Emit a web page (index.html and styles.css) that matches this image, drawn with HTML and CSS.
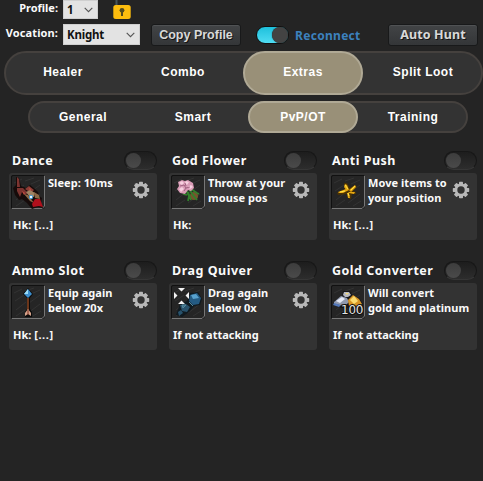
FILE: index.html
```html
<!DOCTYPE html>
<html lang="en">
<head>
  <meta charset="UTF-8" />
  <title>Extras</title>
  <link rel="stylesheet" href="styles.css">
</head>
<body>
  <svg class="defs" width="0" height="0">
    <symbol id="gear" viewBox="-9 -9 18 18">
      <g fill="#b9b9b9">
        <rect x="-2" y="-8.2" width="4" height="16.4" rx="0.7"/>
        <rect x="-2" y="-8.2" width="4" height="16.4" rx="0.7" transform="rotate(45)"/>
        <rect x="-2" y="-8.2" width="4" height="16.4" rx="0.7" transform="rotate(90)"/>
        <rect x="-2" y="-8.2" width="4" height="16.4" rx="0.7" transform="rotate(135)"/>
        <circle r="6.4"/>
      </g>
      <circle r="3.7" fill="#333"/>
    </symbol>
    <symbol id="chevron" viewBox="0 0 9 6">
      <path d="M0.7 0.8 L4.5 4.6 L8.3 0.8" fill="none" stroke="#555" stroke-width="1.1"/>
    </symbol>
    <symbol id="slot" viewBox="0 0 34 34">
      <rect width="34" height="34" rx="2" fill="#252525"/>
      <path d="M3 8l8-4M14 6l9-3M4 16l9-6M20 9l9-4M5 25l10-8M18 18l11-8M5 31l9-6M17 28l12-9M22 31l8-5" stroke="#333" fill="none"/>
      <path d="M0.5 33 V2 Q0.5 0.5 2 0.5 H33" stroke="#111" fill="none"/>
      <path d="M1 33.5 H31 L33.5 31 V1" stroke="#777" fill="none"/>
    </symbol>
  </svg>

  <div class="row profile-row">
    <label>Profile:</label>
    <div class="select small">1 <svg width="9" height="6"><use href="#chevron"/></svg></div>
    <svg class="lock" width="18" height="20" viewBox="0 0 18 20">
      <path d="M3.5 0 V6" stroke="#46545a" stroke-width="2"/>
      <rect x="0.3" y="5" width="17.4" height="14" rx="2.5" fill="#fdbd0e"/>
      <circle cx="9" cy="10.3" r="2.4" fill="#544b1e"/>
      <rect x="8" y="11" width="2" height="5" fill="#544b1e"/>
    </svg>
  </div>
  <div class="row vocation-row">
    <label>Vocation:</label>
    <div class="select">Knight <svg width="9" height="6"><use href="#chevron"/></svg></div>
    <button class="copy">Copy Profile</button>
    <span class="switch on"></span>
    <span class="reconnect">Reconnect</span>
    <button class="hunt">Auto Hunt</button>
  </div>

  <div class="tabs main-tabs">
    <div class="tab">Healer</div>
    <div class="tab">Combo</div>
    <div class="tab active">Extras</div>
    <div class="tab">Split Loot</div>
  </div>
  <div class="tabs sub-tabs">
    <div class="tab">General</div>
    <div class="tab">Smart</div>
    <div class="tab active">PvP/OT</div>
    <div class="tab">Training</div>
  </div>

  <div class="grid">
    <div class="item">
      <div class="head"><span>Dance</span><span class="switch"></span></div>
      <div class="card">
        <div class="info">
          <svg class="icon" width="34" height="34" viewBox="0 0 34 34">
            <use href="#slot"/>
            <path d="M5 2l3 1 2 8 5 2 4-3 5 4 3 3 1 4 3 2-1 5 2 5-5-1-6 2-5-6-5-4-3 1-4-5-2-7 3-3z" fill="#160b0a"/>
            <path d="M6 2l2 2 1 8-3 0zM6 13l6 0 5 5-3 2-3-3-2 5-3-6z" fill="#7c3430"/>
            <path d="M14 14l4-3 5 4-3 3z" fill="#8c3d36"/>
            <path d="M15 17l4-2 5 3-1 4-5-1z" fill="#a08463"/>
            <path d="M13 19l4 1 6 8-4-2zM23 17l5 3 1 4-5-1z" fill="#8b6946"/>
            <path d="M24 24l5 0 3 8-4-1-6 1-1-3z" fill="#b0101c"/>
            <path d="M11 16l3 2-1 2zM18 13l2 1-1 2z" fill="#c34b40"/>
            <circle cx="20" cy="22" r="2.2" fill="#4b9bd0"/>
            <rect x="19" y="21" width="2" height="2" fill="#eef8ff"/>
          </svg>
          <p>Sleep: 10ms</p>
          <svg class="gear" width="18" height="18"><use href="#gear"/></svg>
        </div>
        <div class="note">Hk: <span class="keys">[...]</span></div>
      </div>
    </div>

    <div class="item">
      <div class="head"><span>God Flower</span><span class="switch"></span></div>
      <div class="card">
        <div class="info">
          <svg class="icon" width="34" height="34" viewBox="0 0 34 34">
            <use href="#slot"/>
            <circle cx="23" cy="21" r="4" fill="#75552c"/>
            <path d="M15 15l3 6-1 5M18 14l4 6 4 5M20 14l6 4 2 1M12 19l4 1M17 17l3 8" stroke="#32812c" stroke-width="1.8" fill="none"/>
            <path d="M7 7l4-2 3 1 3-1 5 3 1 5-3 3-3-1-3 4-5-1-3-4 2-3z" fill="#d99bb6"/>
            <path d="M8 8l3-2 2 2-2 2zM15 6l3 1-2 3-2-2zM8 14l3-2 2 2-3 3zM17 12l3-2 2 2-3 2z" fill="#f7cfdf"/>
            <path d="M9 11l4-1 2 3 4-1M13 16l2-3M14 8l1 3" stroke="#925271" fill="none" stroke-width=".8"/>
          </svg>
          <p>Throw at your<br>mouse pos</p>
          <svg class="gear" width="18" height="18"><use href="#gear"/></svg>
        </div>
        <div class="note">Hk:</div>
      </div>
    </div>

    <div class="item">
      <div class="head"><span>Anti Push</span><span class="switch"></span></div>
      <div class="card">
        <div class="info">
          <svg class="icon" width="34" height="34" viewBox="0 0 34 34">
            <use href="#slot"/>
            <path d="M13 8h3l3 5 5-3 2 2-4 4 3 1v2h-4l-1 5h-2l-2-5-9 1-1-2 8-4z" fill="#4a3204"/>
            <path d="M14 9l2 1 2 5-2 1-3-4zM7 17l8-3 1 2-4 2H8zM18 15l6-5 1 2-5 5zM17 17h7l-1 2-5-1zM16 18h2l1 5-2 0z" fill="#e6a812"/>
            <path d="M14 10l3 4M9 17l5-1M20 15l4-4M17 18l1 3" stroke="#ffe34a" fill="none"/>
          </svg>
          <p>Move items to<br>your position</p>
          <svg class="gear" width="18" height="18"><use href="#gear"/></svg>
        </div>
        <div class="note">Hk: <span class="keys">[...]</span></div>
      </div>
    </div>

    <div class="item">
      <div class="head"><span>Ammo Slot</span><span class="switch"></span></div>
      <div class="card">
        <div class="info">
          <svg class="icon" width="34" height="34" viewBox="0 0 34 34">
            <use href="#slot"/>
            <path d="M17 3l5 6-3 4v11l2 3v5h-7v-5l2-3V13l-4-4z" fill="#0b0b0b"/>
            <path d="M17 4l4 5-4 4-4-4z" fill="#3d8fce"/>
            <path d="M17 4v5h-4z" fill="#9bdcf6"/>
            <path d="M17 13v13" stroke="#84411f" stroke-width="1.6"/>
            <path d="M17 24l3 4v3l-3-2-3 2v-3z" fill="#d5a38b"/>
            <path d="M17 25v5" stroke="#7c2e20"/>
          </svg>
          <p>Equip again<br>below 20x</p>
          <svg class="gear" width="18" height="18"><use href="#gear"/></svg>
        </div>
        <div class="note">Hk: <span class="keys">[...]</span></div>
      </div>
    </div>

    <div class="item">
      <div class="head"><span>Drag Quiver</span><span class="switch"></span></div>
      <div class="card">
        <div class="info">
          <svg class="icon" width="34" height="34" viewBox="0 0 34 34">
            <use href="#slot"/>
            <path d="M5 30l4-11 7-3 3-8 8-1 4 7-2 6-6 1-5 6-7 5z" fill="#101a20"/>
            <path d="M19 10l7-2 4 5-2 6-6 1-4-4z" fill="#245b83"/>
            <path d="M20 10l5-1 3 4-6 1z" fill="#58a2cf"/>
            <path d="M9 20l6-1 4 3-3 5-5-1zM7 27l3-2 2 3-4 3z" fill="#28526c"/>
            <path d="M11 20l4 0-3 3zM18 17l4 4" stroke="#53879b" fill="#3b6c87"/>
            <path d="M7 3h7l-3.5 3.5zM3 7v7l3.5-3.5zM18 7v7l-3.5-3.5zM7 19h7l-3.5-3.5z" fill="#f3f3f3"/>
          </svg>
          <p>Drag again<br>below 0x</p>
          <svg class="gear" width="18" height="18"><use href="#gear"/></svg>
        </div>
        <div class="note">If not attacking</div>
      </div>
    </div>

    <div class="item">
      <div class="head"><span>Gold Converter</span><span class="switch"></span></div>
      <div class="card">
        <div class="info">
          <svg class="icon" width="34" height="34" viewBox="0 0 34 34">
            <use href="#slot"/>
            <path d="M12 6h7l3 5 6 2 4 6-4 4H10l-8-3 2-5 7-3z" fill="#171719"/>
            <path d="M13 7h5l2 3-3 2h-3l-2-2z" fill="#b5b7c0"/>
            <path d="M14 8h4l-2 2z" fill="#f0d77c"/>
            <path d="M3 17l7-6 6 2 2 4-4 4-11-2z" fill="#8f99ae"/>
            <path d="M5 16l6-4 3 2-5 4z" fill="#e5e9f5"/>
            <path d="M3 18l7 2-2 2-6-2z" fill="#5378ba"/>
            <path d="M17 15l5-5 6 4 3 5-5 3-8-1z" fill="#d79525"/>
            <path d="M19 15l4-4 4 5-4 3z" fill="#fbdc70"/>
            <text class="count" x="10" y="28.5" textLength="22.5">100</text>
          </svg>
          <p>Will convert<br>gold and platinum</p>
        </div>
        <div class="note">If not attacking</div>
      </div>
    </div>
  </div>
</body>
</html>
```
FILE: styles.css
```css
* {
  box-sizing: border-box;
}

body {
  margin: 0;
  width: 483px;
  height: 481px;
  overflow: hidden;
  background: #242424;
  color: #fafafa;
  font-family: "Noto Sans", "Open Sans", sans-serif;
  font-size: 11px;
  font-weight: bold;
}

svg {
  display: block;
  flex: none;
}

.defs {
  position: absolute;
}

.row {
  display: flex;
  align-items: center;
}

.row label {
  width: 58px;
  margin-right: 5px;
  text-align: right;
  line-height: 18px;
}

.profile-row {
  height: 20px;
  align-items: flex-start;
}

.profile-row label {
  line-height: 16px;
}

.vocation-row {
  height: 21px;
  margin-top: 4px;
}

.vocation-row label {
  line-height: 17px;
  align-self: flex-start;
  letter-spacing: 0.1px;
}

.select {
  display: flex;
  align-items: center;
  justify-content: space-between;
  width: 77px;
  height: 21px;
  padding: 0 4px 0 3px;
  background: #e3e3e3;
  border: 1px solid #cfcfcf;
  color: #111;
  font-size: 11.5px;
  letter-spacing: -0.2px;
}

.select.small {
  width: 35px;
  height: 19px;
}

.lock {
  margin-left: 15px;
}

button {
  height: 22px;
  padding: 0;
  background: linear-gradient(#424446, #343638);
  border: 1px solid #18191a;
  border-radius: 3px;
  box-shadow: inset 0 1px #505254;
  color: #d9d9d9;
  font-family: "Liberation Sans", Arial, sans-serif;
  font-size: 12.5px;
  font-weight: bold;
  text-shadow: 1px 1px #151515;
}

.copy {
  width: 90px;
  margin-left: 11px;
}

.hunt {
  width: 90px;
  margin-left: auto;
  margin-right: 5px;
  font-family: "Noto Sans", "Open Sans", sans-serif;
  font-size: 12.5px;
  letter-spacing: 0.1px;
}

.switch {
  display: block;
  flex: none;
  width: 33px;
  height: 19px;
  padding: 1px;
  background: linear-gradient(#1d1d1d, #2d2d2d);
  border: 1px solid #171717;
  border-bottom-color: #363636;
  border-radius: 10px;
}

.switch::before {
  content: "";
  display: block;
  width: 15px;
  height: 15px;
  border-radius: 50%;
  background: linear-gradient(#3d3d3d, #4a4a4a);
}

.switch.on {
  height: 18px;
  margin-left: 15px;
  padding: 0;
  background: linear-gradient(#1ec0dc, #4fdcf2);
  border-color: #111;
}

.switch.on::before {
  width: 16px;
  height: 16px;
  margin-left: 15px;
  background: #434343;
  box-shadow: 0 0 1px #111;
}

.reconnect {
  margin: 1px 0 0 6px;
  color: #3c81be;
  font-size: 12px;
  letter-spacing: 0.3px;
}

.tabs {
  display: flex;
  background: #333;
  border: 2px solid #45413e;
  font-family: "Liberation Sans", Arial, sans-serif;
  font-size: 12px;
  letter-spacing: 0.5px;
}

.tab {
  display: flex;
  align-items: center;
  justify-content: center;
  margin: -2px 0;
  color: #fff;
}

.tab.active {
  background: #999078;
  border: 2px solid #b0a995;
}

.main-tabs {
  width: 479px;
  height: 44px;
  margin: 6px 0 0 4px;
  border-radius: 22px;
}

.main-tabs .tab {
  flex: 0 0 120px;
  padding-bottom: 2px;
}

.main-tabs .tab:first-child {
  margin-left: -3px;
}

.main-tabs .active {
  border-radius: 22px;
}

.sub-tabs {
  width: 440px;
  height: 32px;
  margin: 6px 0 0 28px;
  border-radius: 16px;
}

.sub-tabs .tab {
  flex: 0 0 110px;
  padding-bottom: 1px;
}

.sub-tabs .tab:first-child {
  margin-left: -2px;
}

.sub-tabs .active {
  border-radius: 16px;
}

.grid {
  display: grid;
  grid-template-columns: repeat(3, 148px);
  column-gap: 12px;
  row-gap: 20px;
  margin: 17px 0 0 9px;
}

.item {
  height: 90px;
}

.head {
  display: flex;
  align-items: center;
  justify-content: space-between;
  height: 20px;
  margin-bottom: 3px;
  padding-left: 3px;
  font-size: 12.5px;
  letter-spacing: 0.5px;
  white-space: nowrap;
}

.card {
  height: 67px;
  padding: 2px;
  background: #333;
  border-radius: 3px;
}

.info {
  display: flex;
  height: 34px;
}

.info p {
  flex: 1;
  margin: 0 0 0 3px;
  line-height: 15px;
  letter-spacing: 0.05px;
  white-space: nowrap;
}

.gear {
  margin: 6px 5px 0 0;
}

.note {
  margin: 9px 0 0 2px;
  line-height: 14px;
}

.keys {
  letter-spacing: 0.6px;
}

.count {
  fill: #e4e4e4;
  stroke: #111;
  stroke-width: 2px;
  paint-order: stroke;
  font: 12px "DejaVu Sans", sans-serif;
}
```
